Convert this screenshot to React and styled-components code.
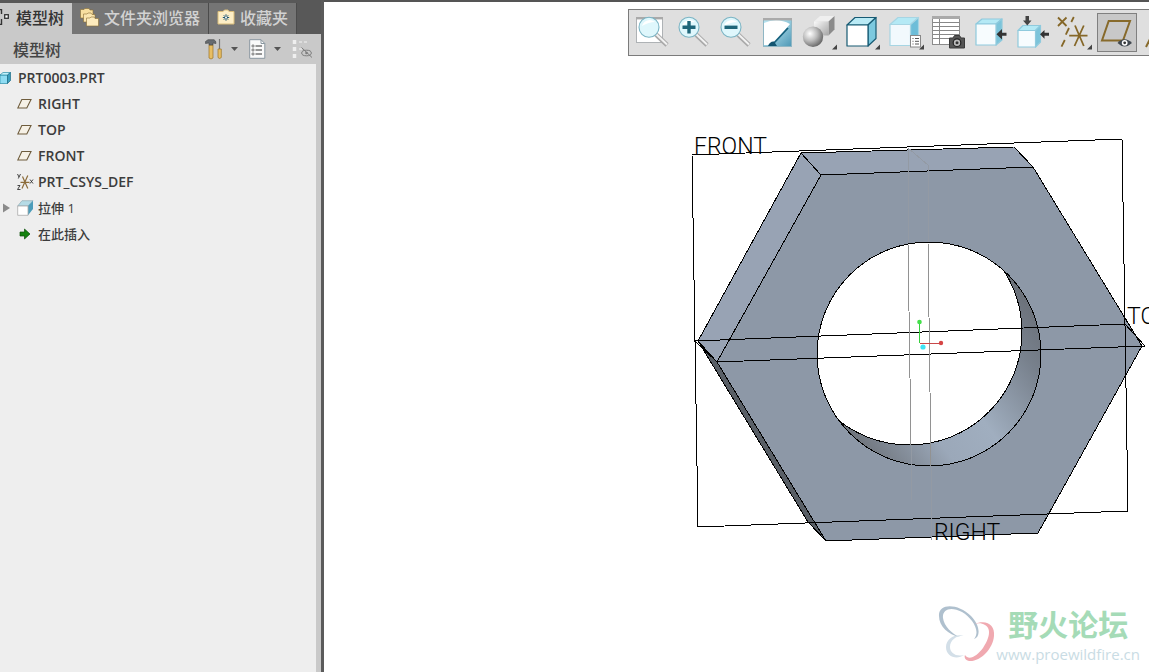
import { useState } from "react";
import styled, { createGlobalStyle } from "styled-components";

const GlobalStyle = createGlobalStyle`
  * {
    box-sizing: border-box;
  }

  body {
    margin: 0;
    overflow: hidden;
    background: #fff;
    font-family: "Open Sans", "Noto Sans CJK SC", sans-serif;
  }

  button {
    font: inherit;
    border: 0;
    padding: 0;
    background: none;
    cursor: pointer;
  }
`;

/* ---------- side panel icons ---------- */

const StructureIcon = () => (
  <svg width="9" height="16" viewBox="0 0 9 16" fill="none" stroke="#333">
    <path d="M0 0.5H1.5V5M0 15.5H1.5V10" strokeWidth="1.4" />
    <rect x="4.7" y="5.7" width="3.6" height="3.6" fill="#fff" strokeWidth="1.3" />
  </svg>
);

const FoldersIcon = () => (
  <svg width="19" height="19" viewBox="0 0 19 19" stroke="#8a6d33" strokeWidth="0.6">
    <path d="M0.5 1.5H4L5 0.5H9L10 2H13V10H0.5Z" fill="#f8dfa0" />
    <path d="M3.5 6H7L8 5H11L12 6.5H15V14H3.5Z" fill="#fbe6b0" />
    <path d="M6.5 10H10L11 9H14L15 10.5H18.5V18H6.5Z" fill="#fdebbd" />
  </svg>
);

const FavoriteIcon = () => (
  <svg width="18" height="16" viewBox="0 0 18 16">
    <path d="M1 2.5H6L7.5 1H11L12 2.5H17V15H1Z" fill="#fdeec6" stroke="#d9bd7b" />
    <path d="M9 5.3V11.7M5.8 8.5H12.2M6.8 6.3L11.2 10.7M11.2 6.3L6.8 10.7" stroke="#1c5573" />
    <circle cx="9" cy="8.5" r="1" fill="#fff" />
  </svg>
);

const ToolsIcon = () => (
  <svg width="18" height="21" viewBox="0 0 18 21">
    <path d="M4 6H8V19Q6 21 4 19Z" fill="#e8be63" stroke="#9b7426" strokeWidth="0.7" />
    <path d="M0.5 2.5L3 0.7H9Q11 1.5 11 4.5L8 4V6H4V4L0.5 4.5Z" fill="#666b70" stroke="#454545" strokeWidth="0.6" />
    <path d="M14.5 0V10" stroke="#777" strokeWidth="1.2" />
    <path d="M13 10H16.3V18.5Q14.6 20.5 13 18.5Z" fill="#e8be63" stroke="#9b7426" strokeWidth="0.7" />
  </svg>
);

const SettingsDocIcon = () => (
  <svg width="17" height="20" viewBox="0 0 17 20" fill="none">
    <path d="M0.7 0.7H12L15.8 4.5V19.3H0.7Z" fill="#fafafa" stroke="#8a97a0" />
    <path d="M12 0.7V4.5H15.8" stroke="#8a97a0" />
    <path d="M6.5 7H13M6.5 11H13M6.5 15H13" stroke="#333" />
    <g stroke="#555" strokeWidth="0.8">
      <circle cx="4" cy="7" r="1.1" />
      <circle cx="4" cy="11" r="1.1" />
      <circle cx="4" cy="15" r="1.1" />
    </g>
  </svg>
);

const HiddenItemsIcon = () => (
  <svg width="21" height="20" viewBox="0 0 21 20" fill="none">
    <path d="M2.5 1V19" stroke="#efefef" strokeWidth="3.5" strokeDasharray="4 3" />
    <path d="M7 3H17M7 10H10" stroke="#dedede" strokeWidth="2" strokeDasharray="3 2" />
    <ellipse cx="14.5" cy="14" rx="4.8" ry="2.8" stroke="#7d7d7d" />
    <circle cx="14.5" cy="14" r="1.3" fill="#7d7d7d" />
    <path d="M9.5 8.5L20 18.5" stroke="#7d7d7d" />
  </svg>
);

const DownArrow = () => (
  <svg width="7" height="4" viewBox="0 0 7 4">
    <path d="M0 0H7L3.5 4Z" fill="#555" />
  </svg>
);

const PartIcon = () => (
  <svg width="11" height="12" viewBox="0 0 11 12">
    <path d="M0 3H7.5V11.5H0Z" fill="#8fdcf2" stroke="#2a8da8" strokeWidth="0.7" />
    <path d="M0 3L3 0.5H10.5L7.5 3Z" fill="#c4f1fb" stroke="#2a8da8" strokeWidth="0.7" />
    <path d="M7.5 3L10.5 0.5V8.5L7.5 11.5Z" fill="#3a9dbd" stroke="#1d6c84" strokeWidth="0.7" />
  </svg>
);

const PlaneIcon = () => (
  <svg width="16" height="16" viewBox="0 0 16 16">
    <path d="M4.8 3.5H14L9.8 12H0.8Z" fill="#f6f1e6" stroke="#6e5c3c" strokeWidth="1.1" />
  </svg>
);

const CsysIcon = () => (
  <svg width="17" height="18" viewBox="0 0 17 18" fill="none">
    <path d="M10.8 2.5L5 15.5M5.5 3.5L10.8 15.5M3.5 9.3H12.5" stroke="#8b6b3a" strokeWidth="1.2" />
    <path d="M0.5 1L2 4M3.5 1L1.3 5.5M0.5 12.5H3L0.5 16.5H3.5M13 6.5L16 10.5M16 6.5L13 10.5" stroke="#333" strokeWidth="0.9" />
  </svg>
);

const ExtrudeIcon = () => (
  <svg width="17" height="16" viewBox="0 0 17 16">
    <path d="M0.7 6L5 0.7H16L11 6Z" fill="#b5dbe6" stroke="#86a3ac" strokeWidth="0.6" />
    <path d="M11 6L16 0.7V9L11 15.3Z" fill="#4d9dba" />
    <path d="M0.7 6H11V15.3H0.7Z" fill="#fff" stroke="#a9a9a9" strokeWidth="0.8" />
  </svg>
);

const InsertIcon = () => (
  <svg width="16" height="16" viewBox="0 0 16 16">
    <path d="M3 6H7.5V3L13 8L7.5 13V10H3Z" fill="#14830f" stroke="#0b4f0a" strokeWidth="0.7" />
  </svg>
);

/* ---------- view toolbar icons, drawn on a 40 x 39 grid ---------- */

const Magnifier = ({ x = 16, children }) => (
  <g>
    <path d={`M${x + 7} 21.5L${x + 18} 32`} stroke="#a9a9a9" strokeWidth="4.5" />
    <path d={`M${x + 7} 21L${x + 18} 31.5`} stroke="#f2f2f2" strokeWidth="2" />
    <circle cx={x} cy="14.3" r="10" fill="#dff7fc" stroke="#7ab4c4" strokeWidth="1.1" />
    <path d={`M${x - 7} 13A8 8 0 0 1 ${x + 6} 9Q${x} 9 ${x - 7} 13Z`} fill="#fff" />
    {children}
  </g>
);

const MoreCorner = ({ x = 38 }) => (
  <path d={`M${x} 31.5V36.5H${x - 5}Z`} fill="#444" />
);

const RefitIcon = () => (
  <g>
    <rect x="5.5" y="4.5" width="26" height="25" fill="#fff" stroke="#aeb2b5" />
    <rect x="5" y="4" width="27" height="2.4" fill="#a9a9a9" />
    <Magnifier x={18} />
  </g>
);

const ZoomInIcon = () => (
  <Magnifier>
    <path d="M16 8V20.5M9.5 14.3H22.5" stroke="#1e6579" strokeWidth="3.4" />
  </Magnifier>
);

const ZoomOutIcon = () => (
  <Magnifier>
    <path d="M9.5 14.3H22.5" stroke="#1e6579" strokeWidth="3.4" />
  </Magnifier>
);

const RepaintIcon = () => (
  <g>
    <defs>
      <linearGradient id="repaint" x1="0" y1="0" x2="1" y2="1">
        <stop offset="0.3" stopColor="#b4e1ee" />
        <stop offset="1" stopColor="#4d97b5" />
      </linearGradient>
    </defs>
    <rect x="6.5" y="5.5" width="28" height="28" fill="url(#repaint)" stroke="#8fb6c4" />
    <path d="M7 10Q20 4 33 11L15 32H7Z" fill="#fff" />
    <rect x="6" y="5" width="29" height="2.4" fill="#aaa" />
    <path d="M16 31L31 15" stroke="#17607c" strokeWidth="1.8" />
    <path d="M11 33Q13 28 17 28.5L20 33Z" fill="#145571" />
  </g>
);

const ShadingIcon = () => (
  <g>
    <defs>
      <radialGradient id="ball" cx="0.35" cy="0.35" r="0.7">
        <stop offset="0" stopColor="#fff" />
        <stop offset="0.5" stopColor="#bdbdbd" />
        <stop offset="1" stopColor="#666" />
      </radialGradient>
      <linearGradient id="block" x1="0" y1="0" x2="1" y2="1">
        <stop offset="0" stopColor="#fafafa" />
        <stop offset="1" stopColor="#a5a5a5" />
      </linearGradient>
    </defs>
    <path d="M15 8.5L21 3H35.5L29.5 8.5Z" fill="#efefef" />
    <path d="M29.5 8.5L35.5 3V16.5L29.5 22.5Z" fill="#8b8b8b" />
    <path d="M15 8.5H29.5V22.5H15Z" fill="url(#block)" />
    <circle cx="14" cy="23.7" r="10.2" fill="url(#ball)" />
    <MoreCorner />
  </g>
);

const Box = ({ x, y, w, h, dx, dy, line, side, top, front = "#fff" }) => (
  <g stroke={line} strokeWidth="1.2" strokeLinejoin="round">
    <path d={`M${x} ${y}l${dx} ${-dy}h${w}l${-dx} ${dy}Z`} fill={top} />
    <path d={`M${x + w} ${y}l${dx} ${-dy}v${h}l${-dx} ${dy}Z`} fill={side} />
    <rect x={x} y={y} width={w} height={h} fill={front} />
  </g>
);

const DisplayStyleIcon = () => (
  <g>
    <Box x={5} y={12} w={21} h={21} dx={8} dy={7.5} line="#175a73" side="#7cc9df" top="#b9eaf5" />
    <MoreCorner />
  </g>
);

const SavedViewsIcon = () => (
  <g>
    <Box x={5} y={11.5} w={20.5} h={21} dx={8} dy={7} line="#a7d5e3" side="#6dbdd8" top="#b4e9f5" front="#f2f9fd" />
    <rect x="25.5" y="22.5" width="10" height="11.5" fill="#fff" stroke="#888" />
    <path d="M27.5 25.5H28.5M30 25.5H34M27.5 28.3H28.5M30 28.3H34M27.5 31H28.5M30 31H34" stroke="#555" />
    <MoreCorner x={39} />
  </g>
);

const ViewManagerIcon = () => (
  <g>
    <rect x="4.5" y="3.5" width="27" height="28" fill="#fff" stroke="#8b8b8b" />
    <rect x="4" y="3" width="28" height="3" fill="#aaa" />
    <path d="M5 9.5H31M5 13.5H31M5 17.5H31M5 21.5H31M5 25.5H31M11.5 6V31" stroke="#888" fill="none" />
    <path d="M21.5 25H25L26.5 22.5H31.5L33 25H36.5V35H21.5Z" fill="#555" stroke="#3a3a3a" />
    <circle cx="29" cy="29.7" r="3.8" fill="#bbb" stroke="#222" strokeWidth="1.2" />
    <circle cx="29" cy="29.7" r="1.5" fill="#333" />
  </g>
);

const ViewNormalIcon = () => (
  <g>
    <Box x={6} y={11} w={20} h={21} dx={6} dy={5} line="#8fcadd" side="#7cc4da" top="#b4e9f5" front="#f7fcfe" />
    <path d="M26.5 21.3L32 16V19.8H36.5V22.8H32V26.5Z" fill="#333" />
  </g>
);

const SectionIcon = () => (
  <g>
    <Box x={6} y={17.5} w={17.5} h={16.5} dx={5} dy={5} line="#8fcadd" side="#7cc4da" top="#b4e9f5" front="#f7fcfe" />
    <path d="M13.5 3H17V7.5H19.5L15.3 12.5L11 7.5H13.5Z" fill="#444" />
    <path d="M28 21.3L32.5 17V19.8H37V22.8H32.5V25.7Z" fill="#333" />
  </g>
);

const DatumFilterIcon = () => (
  <g>
    <path
      d="M4 4.5L12.5 13M12.5 4.5L4 13M19.8 4L17.3 9M15 15L11.8 21.7M10.8 27L7.5 33.7M15.2 22.7H33.5M29.8 12.5L20.5 33M21 12.5L29.8 33"
      stroke="#856728"
      strokeWidth="1.8"
      fill="none"
    />
    <MoreCorner />
  </g>
);

const PlaneDisplayIcon = () => (
  <g>
    <path d="M11.7 8H33L26 27.5H5Z" fill="none" stroke="#876a2b" strokeWidth="2" />
    <path d="M20.5 30Q27.5 22.5 35 30Q27.5 37 20.5 30Z" fill="#404850" />
    <circle cx="27.7" cy="29.8" r="2.9" fill="#fff" />
    <circle cx="27.7" cy="29.8" r="1.4" fill="#333" />
  </g>
);

const AxisDisplayIcon = () => (
  <path d="M7 34L12 24" stroke="#876a2b" strokeWidth="2" />
);

const tools = [
  { label: "Refit", Icon: RefitIcon },
  { label: "Zoom in", Icon: ZoomInIcon },
  { label: "Zoom out", Icon: ZoomOutIcon },
  { label: "Repaint", Icon: RepaintIcon },
  { label: "Rendering", Icon: ShadingIcon, menu: true },
  { label: "Display style", Icon: DisplayStyleIcon, menu: true },
  { label: "Saved orientations", Icon: SavedViewsIcon, menu: true },
  { label: "View manager", Icon: ViewManagerIcon },
  { label: "View normal", Icon: ViewNormalIcon },
  { label: "Section", Icon: SectionIcon },
  { label: "Datum display filters", Icon: DatumFilterIcon, menu: true },
  { label: "Plane display", Icon: PlaneDisplayIcon },
];

const tabs = [
  { label: "模型树", Icon: StructureIcon },
  { label: "文件夹浏览器", Icon: FoldersIcon },
  { label: "收藏夹", Icon: FavoriteIcon },
];

const features = [
  { label: "RIGHT", Icon: PlaneIcon },
  { label: "TOP", Icon: PlaneIcon },
  { label: "FRONT", Icon: PlaneIcon },
  { label: "PRT_CSYS_DEF", Icon: CsysIcon },
  { label: "拉伸 1", Icon: ExtrudeIcon, expandable: true, chinese: true },
  { label: "在此插入", Icon: InsertIcon, chinese: true },
];

const Model = () => (
  <Scene viewBox="324 56 825 616" preserveAspectRatio="xMaxYMin meet">
    <defs>
      <linearGradient id="bore" gradientUnits="userSpaceOnUse" x1="1030" y1="285" x2="840" y2="430">
        <stop offset="0" stopColor="#686d75" />
        <stop offset="0.2" stopColor="#78818d" />
        <stop offset="0.5" stopColor="#a0aebf" />
        <stop offset="0.7" stopColor="#9ba8b9" />
        <stop offset="1" stopColor="#6b7077" />
      </linearGradient>
      <clipPath id="opening">
        <circle cx="929" cy="354" r="112" />
      </clipPath>
    </defs>

    <Edges>
      <path d="M801 153L1014 147L1033 167L821 175Z" fill="#98a3b4" />
      <path d="M801 153L821 175L717 362L698 341Z" fill="#98a3b4" />
      <path d="M698 341L717 362L826 541L808 522Z" fill="#595f66" />
      <path d="M1124 316L1142 346L1125 324Z" fill="#7a838f" />
      <path d="M821 175L1033 167L1142 346L1038 533L826 541L717 362Z" fill="#8d98a7" />

      <circle cx="929" cy="354" r="112" fill="url(#bore)" />
      <circle cx="909" cy="332" r="113" fill="#fff" clipPath="url(#opening)" />
      <circle cx="929" cy="354" r="112" fill="none" />

      {/* datum planes */}
      <path d="M692 155L1122 139L1128 511L698 527Z" fill="none" />
      <path d="M695 341L1125 324L1145 346L717 362Z" fill="none" />
    </Edges>

    <g fill="none" shapeRendering="crispEdges">
      <path d="M908 148L908 243M908 148L928 165V242M911 445V500M931 466V540" stroke="#939aa4" />
      <path d="M908 243L911 445M928 242L931 466" stroke="#929292" />
    </g>

    {/* coordinate system */}
    <path d="M919.5 322V343" stroke="#35cf3c" />
    <path d="M920 343.5H941" stroke="#c8484a" />
    <circle cx="919.5" cy="322" r="2.3" fill="#43e04a" />
    <circle cx="941" cy="343" r="2.2" fill="#d64545" />
    <circle cx="923" cy="347" r="2.6" fill="#3fe3f5" />

    <DatumLabel x="694" y="154">FRONT</DatumLabel>
    <DatumLabel x="1127" y="324">TOP</DatumLabel>
    <DatumLabel x="934" y="540">RIGHT</DatumLabel>
  </Scene>
);

const App = () => {
  const [activeTab, setActiveTab] = useState(0);

  return (
    <Window>
      <GlobalStyle />
      <SidePanel>
        <TabBar>
          {tabs.map(({ label, Icon }, i) => (
            <Tab key={label} $active={i === activeTab} $first={i === 0} onClick={() => setActiveTab(i)}>
              <Icon />
              {label}
            </Tab>
          ))}
        </TabBar>
        <PanelHeader>
          <PanelTitle>模型树</PanelTitle>
          <HeaderButton aria-label="Tools">
            <ToolsIcon />
            <DownArrow />
          </HeaderButton>
          <HeaderButton aria-label="Tree settings">
            <SettingsDocIcon />
            <DownArrow />
          </HeaderButton>
          <HeaderButton aria-label="Show hidden items">
            <HiddenItemsIcon />
          </HeaderButton>
        </PanelHeader>
        <Tree>
          <RootItem>
            <PartIcon />
            PRT0003.PRT
          </RootItem>
          {features.map(({ label, Icon, expandable, chinese }) => (
            <TreeItem key={label} $chinese={chinese}>
              <Expander>
                {expandable && (
                  <svg width="7" height="10" viewBox="0 0 7 10">
                    <path d="M0 0.5L7 5L0 9.5Z" fill="#8a8a8a" />
                  </svg>
                )}
              </Expander>
              <ItemIcon>
                <Icon />
              </ItemIcon>
              {label}
            </TreeItem>
          ))}
        </Tree>
      </SidePanel>

      <Viewport>
        <Toolbar>
          {tools.map(({ label, Icon, menu }) => (
            <ToolButton key={label} aria-label={label} $menu={menu} $pressed={label === "Plane display"}>
              <svg width="40" height="39" viewBox="0 0 40 39">
                <Icon />
              </svg>
            </ToolButton>
          ))}
          <CutOff>
            <ToolButton aria-label="Axis display">
              <svg width="40" height="39" viewBox="0 0 40 39">
                <AxisDisplayIcon />
              </svg>
            </ToolButton>
          </CutOff>
        </Toolbar>
        <Model />
        <Watermark>
          <svg width="58" height="56" viewBox="0 0 58 56">
            <path d="M1 10C0 -3 20 -3 33 10C42 19 43 31 36 33C43 25 34 12 24 6C13 0 4 3 5 12C6 20 14 28 22 31C10 29 1 20 1 10Z" fill="#afc0ce" />
            <path d="M36 18C49 13 57 19 56 30C55 43 42 56 31 55C27 54 26 51 27 49C31 55 39 50 45 42C51 33 54 23 47 19C44 17 40 17 36 18Z" fill="#f0a9b0" />
            <path d="M27 30C18 27 8 32 8 41C8 51 19 54 26 49C18 51 12 47 12 41C12 34 19 29 27 30Z" fill="#d3dfe8" />
          </svg>
          <div>
            <SiteName>野火论坛</SiteName>
            <SiteUrl>www.proewildfire.cn</SiteUrl>
          </div>
        </Watermark>
      </Viewport>
    </Window>
  );
};

export default App;

const Window = styled.div`
  display: flex;
  height: 100vh;
`;

const SidePanel = styled.aside`
  flex: none;
  width: 324px;
  display: flex;
  flex-direction: column;
  background: #c9c9c9;
  border-right: 3px solid #5b5b5b;
`;

const TabBar = styled.div`
  display: flex;
  height: 34px;
  padding-top: 3px;
  background: #585858;
`;

const Tab = styled.button`
  display: flex;
  align-items: center;
  gap: ${props => props.$first ? '7px' : '5px'};
  padding: ${props => props.$first ? '0 8px 3px 0' : '0 8px 3px'};
  border-right: ${props => props.$first ? '0' : '1px solid #4b4b4b'};
  background: ${props => props.$active ? '#c9c9c9' : '#757575'};
  color: ${props => props.$active ? '#333' : '#d2d2d2'};
  font-family: "Noto Sans CJK SC", sans-serif;
  font-size: 16px;
  font-weight: 500;
  line-height: 24px;
  white-space: nowrap;
`;

const PanelHeader = styled.div`
  display: flex;
  align-items: center;
  gap: 11px;
  height: 30px;
  padding: 0 8px 0 13px;
`;

const PanelTitle = styled.h1`
  flex: 1;
  margin: 0;
  color: #444;
  font-family: "Noto Sans CJK SC", sans-serif;
  font-size: 16px;
  font-weight: 500;
  line-height: 24px;
`;

const HeaderButton = styled.button`
  display: flex;
  align-items: center;
  gap: 8px;
`;

const Tree = styled.ul`
  flex: 1;
  margin: 0 5px 0 0;
  padding: 1px 0;
  background: #eee;
  list-style: none;
  color: #3c3c3c;
  line-height: 26px;
`;

const TreeItem = styled.li`
  display: flex;
  align-items: center;
  height: 26px;
  font-size: ${props => props.$chinese ? '13px' : '14px'};
  font-weight: ${props => props.$chinese ? 500 : 600};
`;

const RootItem = styled(TreeItem)`
  gap: 7px;
`;

const Expander = styled.span`
  display: flex;
  width: 17px;
  padding-left: 3px;
`;

const ItemIcon = styled.span`
  display: flex;
  width: 21px;
`;

const Viewport = styled.main`
  position: relative;
  flex: 1;
  min-width: 0;
  display: flex;
  flex-direction: column;
  border-top: 2px solid #555;
`;

const Toolbar = styled.div`
  display: flex;
  align-self: flex-end;
  gap: 2px;
  margin-top: 7px;
  padding: 3px 0 3px 2px;
  border: 1px solid #7b7b7b;
  border-right: 0;
  background: #dfdfdf;
`;

const ToolButton = styled.button`
  flex: none;
  display: flex;
  width: ${props => props.$menu ? '41px' : '40px'};
  height: 39px;
  background: ${props => props.$pressed ? '#c8c8c8' : 'none'};
  box-shadow: ${props => props.$pressed ? 'inset 0 0 0 1px #808080' : 'none'};
`;

const CutOff = styled.div`
  display: flex;
  width: 10px;
  overflow: hidden;
`;

const Scene = styled.svg`
  flex: 1;
  width: 100%;
  min-height: 0;
`;

const Edges = styled.g`
  stroke: #000;
  stroke-width: 1;
  stroke-linejoin: round;
  shape-rendering: crispEdges;
`;

const DatumLabel = styled.text`
  fill: #000;
  font-family: Roboto, sans-serif;
  font-size: 23px;
  font-weight: 300;
`;

const Watermark = styled.div`
  position: absolute;
  right: 9px;
  bottom: 7px;
  display: flex;
  align-items: center;
`;

const SiteName = styled.div`
  padding-left: 12px;
  color: #a5dbb7;
  font-family: "Noto Sans CJK SC", sans-serif;
  font-size: 30px;
  font-weight: 700;
  line-height: 40px;
`;

const SiteUrl = styled.div`
  color: #c9dce4;
  font-size: 15px;
  line-height: 22px;
`;
